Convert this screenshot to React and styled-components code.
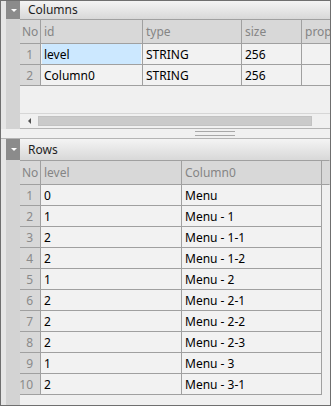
import React from "react";
import styled, { createGlobalStyle } from "styled-components";

const columnsData = [
  { no: 1, id: "level", type: "STRING", size: "256", selected: true },
  { no: 2, id: "Column0", type: "STRING", size: "256" },
];

const rowsData = [
  ["0", "Menu"],
  ["1", "Menu - 1"],
  ["2", "Menu - 1-1"],
  ["2", "Menu - 1-2"],
  ["1", "Menu - 2"],
  ["2", "Menu - 2-1"],
  ["2", "Menu - 2-2"],
  ["2", "Menu - 2-3"],
  ["1", "Menu - 3"],
  ["2", "Menu - 3-1"],
];

export default function App() {
  return (
    <>
      <GlobalStyle />
      <Frame>
        <Section $height="128px">
          <Gutter>
            <Toggle $height="18px">
              <Arrow />
            </Toggle>
          </Gutter>
          <Main>
            <Band $height="18px">Columns</Band>
            <Grid $cols="21px 102px 99px 60px 60px">
              <HeadCell $tight>No</HeadCell>
              <HeadCell>id</HeadCell>
              <HeadCell>type</HeadCell>
              <HeadCell>size</HeadCell>
              <HeadCell>prop</HeadCell>
              {columnsData.map((r) => (
                <React.Fragment key={r.no}>
                  <NoCell>{r.no}</NoCell>
                  <Cell $selected={r.selected}>{r.id}</Cell>
                  <Cell>{r.type}</Cell>
                  <Cell>{r.size}</Cell>
                  <Cell />
                </React.Fragment>
              ))}
            </Grid>
            <Filler />
            <ScrollBar>
              <ScrollArrow />
              <Thumb />
            </ScrollBar>
          </Main>
        </Section>
        <Splitter>
          <Grip />
        </Splitter>
        <Section $grow>
          <Gutter>
            <Toggle $height="21px">
              <Arrow />
            </Toggle>
          </Gutter>
          <Main>
            <Band $height="21px">Rows</Band>
            <Grid $cols="21px 141px 140px 1fr">
              <HeadCell $tight>No</HeadCell>
              <HeadCell>level</HeadCell>
              <HeadCell>Column0</HeadCell>
              <HeadCell $last />
              {rowsData.map((r, i) => (
                <React.Fragment key={i}>
                  <NoCell>{i + 1}</NoCell>
                  <Cell>{r[0]}</Cell>
                  <Cell>{r[1]}</Cell>
                  <Blank />
                </React.Fragment>
              ))}
            </Grid>
          </Main>
        </Section>
      </Frame>
    </>
  );
}

const GlobalStyle = createGlobalStyle`
  body {
    margin: 0;
    background: #ffffff;
    font-family: "Noto Sans", "Open Sans", sans-serif;
  }
`;

const Frame = styled.div`
  width: 331px;
  height: 406px;
  box-sizing: border-box;
  border: 1px solid #6f6f6f;
  background: #f0f0f0;
  padding-left: 5px;
  display: flex;
  flex-direction: column;
  overflow: hidden;
  box-shadow: inset 5px 0 0 #e6e6e6;
`;

const Section = styled.div`
  display: flex;
  height: ${(p) => p.$height || "auto"};
  flex: ${(p) => (p.$grow ? 1 : "none")};
  min-height: 0;
`;

const Gutter = styled.div`
  width: 14px;
  flex: none;
  background: #d3d3d3;
`;

const Toggle = styled.div`
  height: ${(p) => p.$height};
  background: #8b8b8b;
  display: flex;
  align-items: center;
  justify-content: center;
`;

const Arrow = styled.div`
  width: 0;
  height: 0;
  border-left: 3px solid transparent;
  border-right: 3px solid transparent;
  border-top: 3px solid #ffffff;
  margin-left: 1px;
`;

const Main = styled.div`
  flex: 1;
  min-width: 0;
  display: flex;
  flex-direction: column;
  overflow: hidden;
`;

const Band = styled.div`
  height: ${(p) => p.$height};
  flex: none;
  box-sizing: border-box;
  background: linear-gradient(#f4f4f4, #d8d8d8);
  color: #1e1e1e;
  font-size: 12px;
  line-height: ${(p) => p.$height};
  padding-left: 8px;
`;

const Grid = styled.div`
  display: grid;
  grid-template-columns: ${(p) => p.$cols};
  grid-auto-rows: 21px;
  grid-template-rows: 25px;
  font-size: 12px;
  flex: none;
`;

const BaseCell = styled.div`
  box-sizing: border-box;
  border-right: 1px solid #a0a0a0;
  border-bottom: 1px solid #a0a0a0;
  padding-left: 3px;
  white-space: nowrap;
  overflow: hidden;
  display: flex;
  align-items: center;
`;

const HeadCell = styled(BaseCell)`
  background: #d8d8d8;
  color: #858585;
  border-top: 1px solid #a0a0a0;
  padding-left: ${(p) => (p.$tight ? "2px" : "3px")};
  overflow: ${(p) => (p.$tight ? "visible" : "hidden")};
  border-right-color: ${(p) => (p.$last ? "transparent" : "#a0a0a0")};
`;

const NoCell = styled(BaseCell)`
  background: #d8d8d8;
  color: #8a8a8a;
  justify-content: flex-end;
  padding-left: 0;
  padding-right: 7px;
  overflow: visible;
`;

const Cell = styled(BaseCell)`
  background: ${(p) => (p.$selected ? "#cce8ff" : "#f2f2f2")};
  color: #000000;
  ${(p) => p.$selected && "box-shadow: inset 1px 0 0 #f2f2f2, inset -1px 0 0 #f2f2f2;"}
`;

const Blank = styled.div``;

const Filler = styled.div`
  flex: 1;
`;

const ScrollBar = styled.div`
  height: 16px;
  flex: none;
  box-sizing: border-box;
  border-top: 1px solid #d6d6d6;
  border-bottom: 1px solid #b4b4b4;
  background: #f0f0f0;
  display: flex;
  align-items: center;
  padding-left: 8px;
`;

const ScrollArrow = styled.div`
  width: 0;
  height: 0;
  border-top: 3px solid transparent;
  border-bottom: 3px solid transparent;
  border-right: 3px solid #505050;
`;

const Thumb = styled.div`
  width: 274px;
  height: 10px;
  margin-left: 7px;
  background: #cacaca;
  box-sizing: border-box;
  border: 1px solid #c2c2c2;
`;

const Splitter = styled.div`
  height: 9px;
  flex: none;
  margin-left: -5px;
  background: #f0f0f0;
  border-bottom: 1px solid #b4b4b4;
  display: flex;
  align-items: center;
  padding-left: 194px;
`;

const Grip = styled.div`
  width: 40px;
  height: 3px;
  border-top: 1px solid #a8a8a8;
  border-bottom: 1px solid #a8a8a8;
`;
